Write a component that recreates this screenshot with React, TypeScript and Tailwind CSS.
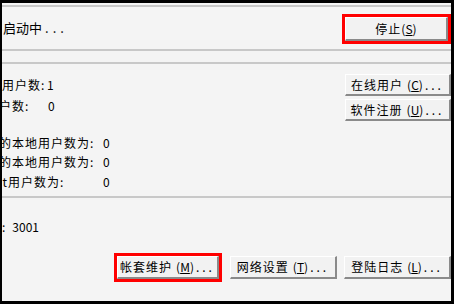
import React from "react";

function Btn({
  label,
  k,
  dots = true,
  space = true,
  w,
  h,
}: {
  label: string;
  k: string;
  dots?: boolean;
  space?: boolean;
  w: string;
  h: string;
}) {
  return (
    <div
      className={`${w} ${h} shrink-0 bg-[#f2f2f2] border-t border-l border-r-2 border-b-2 border-t-white border-l-white border-r-[#8a8a8a] border-b-[#8a8a8a] flex items-center justify-center text-[12px] leading-none text-black whitespace-nowrap`}
    >
      <span className="tracking-[1px]">{label}</span>
      {space ? <span className="w-[4px]" /> : null}
      <span>
        (<span className="underline">{k}</span>)
      </span>
      {dots ? <span className="tracking-[3px] ml-[2px]">...</span> : null}
    </div>
  );
}

export default function App() {
  return (
    <div className="w-[454px] h-[304px] bg-black pt-[3px] pl-[2px] pr-[3px] pb-[3px] font-['Noto_Sans_CJK_SC',sans-serif]">
      <div className="w-full h-full bg-[#f4f4f4] overflow-hidden flex flex-col text-[12px] text-black">
        <div className="mt-[2px] h-[2px] bg-[#c8c8c8] shrink-0" />
        <div className="h-[42px] shrink-0 flex items-center justify-between">
          <div className="pl-[1px] text-[13px] whitespace-nowrap">
            <span className="tracking-[0px]">启动中</span>
            <span className="tracking-[4px] ml-[3px]">...</span>
          </div>
          <div className="w-[109px] h-[30px] mt-[2px] border-[3px] border-[#ff0000] flex">
            <Btn label="停止" k="S" dots={false} space={false} w="w-full" h="h-full" />
          </div>
        </div>
        <div className="h-[2px] bg-[#c8c8c8] shrink-0" />
        <div className="h-[11px] shrink-0" />
        <div className="h-[2px] bg-[#c8c8c8] shrink-0" />
        <div className="h-[132px] shrink-0 flex justify-between">
          <div className="flex flex-col whitespace-nowrap leading-none">
            <div className="mt-[11px] h-[20px] flex items-center">
              <span className="w-[45px] tracking-[1px]">用户数:</span>
              <span>1</span>
            </div>
            <div className="mt-[1px] h-[20px] flex items-center">
              <span className="-ml-[3px] w-[49px] shrink-0 tracking-[1px]">户数:</span>
              <span>0</span>
            </div>
            <div className="mt-[17px] h-[19px] flex items-center">
              <span className="-ml-[3px] w-[104px] shrink-0 tracking-[1px]">的本地用户数为:</span>
              <span>0</span>
            </div>
            <div className="h-[19px] flex items-center">
              <span className="-ml-[3px] w-[104px] shrink-0 tracking-[1px]">的本地用户数为:</span>
              <span>0</span>
            </div>
            <div className="mt-[1px] h-[19px] flex items-center">
              <span className="-ml-[7px] w-[108px] shrink-0 tracking-[1px]">et用户数为:</span>
              <span>0</span>
            </div>
          </div>
          <div className="flex flex-col pt-[10px] gap-[3px]">
            <Btn label="在线用户" k="C" w="w-[106px]" h="h-[22px]" />
            <Btn label="软件注册" k="U" w="w-[106px]" h="h-[22px]" />
          </div>
        </div>
        <div className="h-[2px] bg-[#c8c8c8] shrink-0" />
        <div className="flex-1 flex flex-col">
          <div className="mt-[19px] h-[20px] flex items-center leading-none whitespace-nowrap">
            <span>:</span>
            <span className="ml-[7px]">3001</span>
          </div>
          <div className="mt-[16px] flex justify-end items-center">
            <div className="w-[108px] h-[29px] border-[3px] border-[#ff0000] flex">
              <Btn label="帐套维护" k="M" w="w-full" h="h-full" />
            </div>
            <div className="ml-[8px]">
              <Btn label="网络设置" k="T" w="w-[107px]" h="h-[23px]" />
            </div>
            <div className="ml-[7px]">
              <Btn label="登陆日志" k="L" w="w-[107px]" h="h-[23px]" />
            </div>
          </div>
        </div>
      </div>
    </div>
  );
}
